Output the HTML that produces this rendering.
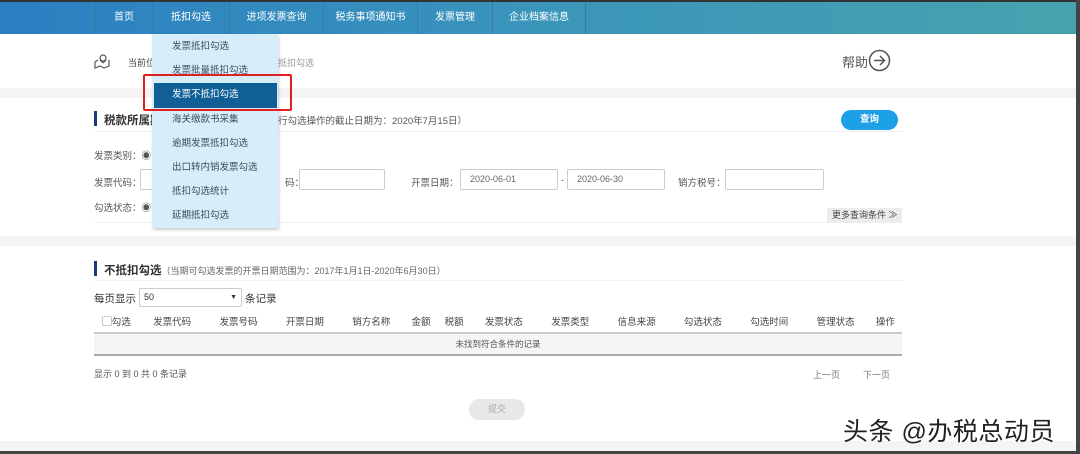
<!DOCTYPE html>
<html><head><meta charset="utf-8"><style>
*{margin:0;padding:0;box-sizing:border-box}
body{width:1080px;height:454px;overflow:hidden;background:#fff;font-family:"Liberation Sans","Noto Sans CJK SC",sans-serif;font-size:10px;color:#555;position:relative}
.a{position:absolute;white-space:nowrap}
.nav{position:absolute;left:0;top:2px;width:1076px;height:32px;background:linear-gradient(90deg,#2b7fc2,#3a95bb 50%,#46a3ae)}
.nav span{position:absolute;top:0;height:32px;line-height:32px;color:#fff;font-size:10px;text-align:center;border-right:1px solid #3a78a6}
.inp{position:absolute;height:21px;border:1px solid #ccc;border-radius:2px;background:#fff;font-size:9px;color:#666;line-height:19px;padding-left:9px}
.grey{position:absolute;left:0;width:1076px;background:#f4f4f4}
.menu{position:absolute;left:152px;top:34px;width:126px;height:194px;background:#d7edf9;box-shadow:1px 2px 3px rgba(0,0,0,.2)}
.menu div{height:24.2px;line-height:24px;padding-left:20px;color:#3c4c5c;font-size:9.5px}
th{font-weight:normal;font-size:9.5px;color:#444;height:24px}
</style></head><body>
<div class="a" style="left:0;top:0;width:1080px;height:2px;background:#333"></div>
<div class="a" style="left:1076px;top:0;width:4px;height:454px;background:#444"></div>
<div class="a" style="left:0;top:451px;width:1080px;height:3px;background:#444"></div>
<div class="nav">
<span style="left:95px;width:58px;border-left:1px solid #3a78a6">首页</span>
<span style="left:153px;width:77px">抵扣勾选</span>
<span style="left:230px;width:94px">进项发票查询</span>
<span style="left:324px;width:94px">税务事项通知书</span>
<span style="left:418px;width:75px">发票管理</span>
<span style="left:493px;width:93px">企业档案信息</span>
</div>
<svg class="a" style="left:94px;top:53px" width="16" height="16" viewBox="0 0 16 16" fill="none" stroke="#555" stroke-width="1.2"><circle cx="9" cy="5" r="3"/><path d="M9 10l-3-3M9 10l3-3M4 7L1 9v6l5-2 4 2 5-2V7"/></svg>
<div class="a" style="left:128px;top:56px;font-size:9px;color:#444">当前位</div>
<div class="a" style="left:278px;top:56px;font-size:9px;color:#999">抵扣勾选</div>
<div class="a" style="left:842px;top:52px;font-size:13px;color:#555">帮助</div>
<svg class="a" style="left:868px;top:49px" width="23" height="23" viewBox="0 0 23 23" fill="none" stroke="#555" stroke-width="1.5"><circle cx="11.5" cy="11.5" r="10"/><path d="M6 11.5h10M12 7l4.5 4.5L12 16"/></svg>
<div class="grey" style="top:88px;height:10px"></div>
<div class="a" style="left:94px;top:111px;width:3px;height:15px;background:#1b3a78"></div>
<div class="a" style="left:104px;top:112px;font-size:11.5px;font-weight:bold;color:#333">税款所属期</div>
<div class="a" style="left:278px;top:113px;font-size:9.5px;color:#555">行勾选操作的截止日期为：2020年7月15日）</div>
<div class="a" style="left:841px;top:110px;width:57px;height:20px;border-radius:10px;background:#1ea0e6;color:#fff;text-align:center;line-height:20px;font-size:9.5px;font-weight:bold">查询</div>
<div class="a" style="left:94px;top:131px;width:808px;height:1px;background:#eee"></div>
<div class="a" style="left:94px;top:148px;font-size:9.5px">发票类别：◉</div>
<div class="a" style="left:94px;top:175px;font-size:9.5px">发票代码：</div>
<div class="inp" style="left:140px;top:169px;width:14px"></div>
<div class="a" style="left:285px;top:175px;font-size:9.5px">码：</div>
<div class="inp" style="left:299px;top:169px;width:86px"></div>
<div class="a" style="left:411px;top:175px;font-size:9.5px">开票日期：</div>
<div class="inp" style="left:460px;top:169px;width:98px">2020-06-01</div>
<div class="a" style="left:561px;top:175px;font-size:9.5px">-</div>
<div class="inp" style="left:567px;top:169px;width:98px">2020-06-30</div>
<div class="a" style="left:678px;top:175px;font-size:9.5px">销方税号：</div>
<div class="inp" style="left:725px;top:169px;width:99px"></div>
<div class="a" style="left:94px;top:200px;font-size:9.5px">勾选状态：◉</div>
<div class="a" style="left:827px;top:208px;width:75px;height:15px;background:#ececec;font-size:9px;color:#444;line-height:15px;padding-left:5px">更多查询条件 ≫</div>
<div class="a" style="left:94px;top:222px;width:808px;height:1px;background:#eee"></div>
<div class="grey" style="top:236px;height:10px"></div>
<div class="a" style="left:94px;top:261px;width:3px;height:15px;background:#1b3a78"></div>
<div class="a" style="left:104px;top:262px;font-size:11.5px;font-weight:bold;color:#333">不抵扣勾选<span style="font-size:9px;font-weight:normal;color:#666">（当期可勾选发票的开票日期范围为：2017年1月1日-2020年6月30日）</span></div>
<div class="a" style="left:94px;top:280px;width:808px;height:1px;background:#f0f0f0"></div>
<div class="a" style="left:94px;top:291px;font-size:10.5px;color:#333">每页显示</div>
<div class="inp" style="left:139px;top:288px;width:103px;height:19px;line-height:17px;padding-left:4px;color:#333">50<span style="position:absolute;right:4px;font-size:7px">▼</span></div>
<div class="a" style="left:245px;top:291px;font-size:10.5px;color:#333">条记录</div>
<table class="a" style="left:94px;top:309px;width:808px;border-collapse:collapse">
<tr style="border-bottom:2px solid #ccc"><th style="width:45px">▢勾选</th><th>发票代码</th><th>发票号码</th><th>开票日期</th><th>销方名称</th><th>金额</th><th>税额</th><th>发票状态</th><th>发票类型</th><th>信息来源</th><th>勾选状态</th><th>勾选时间</th><th>管理状态</th><th>操作</th></tr>
<tr style="background:#f5f5f5;border-bottom:2px solid #aaa"><td colspan="14" style="text-align:center;height:22px;font-size:8.5px;color:#555">未找到符合条件的记录</td></tr>
</table>
<div class="a" style="left:94px;top:367px;font-size:9px">显示 0 到 0 共 0 条记录</div>
<div class="a" style="left:813px;top:368px;font-size:9px;color:#777">上一页</div>
<div class="a" style="left:863px;top:368px;font-size:9px;color:#777">下一页</div>
<div class="a" style="left:469px;top:399px;width:56px;height:21px;border-radius:10px;background:#e8e8e8;color:#aaa;text-align:center;line-height:21px;font-size:9px">提交</div>
<div class="grey" style="top:441px;height:10px"></div>
<div class="a" style="left:843px;top:412px;font-size:25px;letter-spacing:0.5px;color:#222;text-shadow:0 0 2px #fff,0 0 2px #fff">头条 @办税总动员</div>
<div class="menu">
<div style="margin-top:1px">发票抵扣勾选</div>
<div>发票批量抵扣勾选</div>
<div style="background:#115f97;color:#fff;margin:0 1px 0 2px;padding-left:18px">发票不抵扣勾选</div>
<div>海关缴款书采集</div>
<div>逾期发票抵扣勾选</div>
<div>出口转内销发票勾选</div>
<div>抵扣勾选统计</div>
<div>延期抵扣勾选</div>
</div>
<div class="a" style="left:143px;top:74px;width:149px;height:37px;border:2px solid #e02020;border-radius:2px"></div>
</body></html>
